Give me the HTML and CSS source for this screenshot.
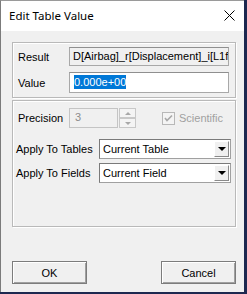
FILE: index.html
```html
<html lang="en">

<head>
    <meta charset="UTF-8">
    <meta name="viewport" content="width=device-width, initial-scale=1.0">
    <title>Edit Table Value</title>
    <link rel="stylesheet" href="styles.css">
</head>

<body>
    <main class="window">
        <header class="titlebar">
            <span class="title">Edit Table Value</span>
            <svg class="close" width="11" height="11" viewBox="0 0 11 11">
                <path d="M0.5 0.5 L10.5 10.5 M10.5 0.5 L0.5 10.5" stroke="#000" stroke-width="1" fill="none" />
            </svg>
        </header>

        <section class="content">
            <div class="group group-top">
                <div class="row">
                    <label class="lbl lbl-short">Result</label>
                    <div class="field field-readonly">D[Airbag]_r[Displacement]_i[L1f]</div>
                </div>
                <div class="row">
                    <label class="lbl lbl-short">Value</label>
                    <div class="field field-value"><span class="selected">0.000e+00</span></div>
                </div>
            </div>

            <div class="group group-bottom">
                <div class="row row-precision">
                    <label class="lbl lbl-short">Precision</label>
                    <div class="field field-disabled">3</div>
                    <div class="spinner">
                        <div class="spin-half"><span class="arrow-up"></span></div>
                        <div class="spin-half"><span class="arrow-down"></span></div>
                    </div>
                    <div class="check">
                        <svg width="13" height="13" viewBox="0 0 13 13">
                            <rect x="0.5" y="0.5" width="12" height="12" fill="#f4f4f4" stroke="#b8b8b8" />
                            <path d="M3 6 L5 8.5 L10 3.5" stroke="#a8a8a8" stroke-width="1.6" fill="none" />
                        </svg>
                        <span>Scientific</span>
                    </div>
                </div>
                <div class="row row-combo">
                    <label class="lbl lbl-long">Apply To Tables</label>
                    <div class="combo">
                        <span class="combo-text">Current Table</span>
                        <span class="combo-btn"><span class="arrow-down dark"></span></span>
                    </div>
                </div>
                <div class="row row-combo">
                    <label class="lbl lbl-long">Apply To Fields</label>
                    <div class="combo">
                        <span class="combo-text">Current Field</span>
                        <span class="combo-btn"><span class="arrow-down dark"></span></span>
                    </div>
                </div>
            </div>

            <div class="buttons">
                <button>OK</button>
                <button>Cancel</button>
            </div>
        </section>
    </main>
</body>

</html>
```

FILE: styles.css
```css
* {
    box-sizing: border-box;
}

body {
    margin: 0;
    background-color: #1d2850;
    font-family: 'Liberation Sans', Arial, sans-serif;
    font-size: 11px;
    color: #000;
}

.window {
    width: 244px;
    height: 292px;
    background-color: #f0f0f0;
    border-left: 1px solid #7b7b7b;
    border-top: 1px solid #9a9a9a;
    display: flex;
    flex-direction: column;
}

.titlebar {
    height: 30px;
    background-color: #fff;
    display: flex;
    align-items: center;
    justify-content: space-between;
    padding: 0 9px 0 8px;
}

.title {
    font-family: 'Noto Sans', sans-serif;
    font-size: 11.5px;
    margin-top: -1px;
}

.close {
    display: block;
    margin-top: -1px;
}

.content {
    padding: 11px 8px 0 11px;
}

.group {
    border: 1px solid #b9b9b9;
    box-shadow: inset 1px 1px 0 #fff, 1px 1px 0 #fff;
    width: 224px;
}

.group-top {
    height: 56px;
    padding: 4px 5px 0 5px;
    display: flex;
    flex-direction: column;
    gap: 6px;
}

.group-bottom {
    margin-top: 2px;
    height: 127px;
    padding: 7px 3px 0 3px;
    display: flex;
    flex-direction: column;
}

.row {
    display: flex;
    align-items: center;
}

.lbl {
    display: block;
}

.lbl-short {
    width: 51px;
}

.row-precision .lbl-short {
    margin-left: 2px;
}

.lbl-long {
    width: 83px;
}

.field {
    height: 19px;
    width: 160px;
    border: 1px solid #a8a8a8;
    border-top-color: #8f8f8f;
    padding: 0 0 0 3px;
    line-height: 17px;
    white-space: nowrap;
    overflow: hidden;
}

.field-readonly {
    background-color: #f0f0f0;
}

.field-value {
    height: 21px;
    background-color: #fff;
    line-height: 19px;
    padding-left: 4px;
}

.selected {
    background-color: #0078d7;
    color: #fff;
    padding: 1px 0;
}

.field-disabled {
    width: 49px;
    height: 20px;
    background-color: #f0f0f0;
    border-color: #c4c4c4;
    color: #8c8c8c;
    padding-left: 5px;
    line-height: 16px;
}

.spinner {
    width: 17px;
    height: 20px;
    margin-left: 1px;
    display: flex;
    flex-direction: column;
}

.spin-half {
    flex: 1;
    border: 1px solid #c8c8c8;
    background-color: #f4f4f4;
    display: flex;
    align-items: center;
    justify-content: center;
}

.arrow-up,
.arrow-down {
    width: 0;
    height: 0;
    border-left: 3px solid transparent;
    border-right: 3px solid transparent;
}

.arrow-up {
    border-bottom: 3px solid #a8a8a8;
}

.arrow-down {
    border-top: 3px solid #a8a8a8;
}

.arrow-down.dark {
    border-left-width: 4px;
    border-right-width: 4px;
    border-top: 4px solid #000;
}

.check {
    margin-left: 26px;
    display: flex;
    align-items: center;
    gap: 4px;
    color: #a0a0a0;
}

.check svg {
    display: block;
}

.row-combo {
    margin-top: 11px;
}

.row-combo + .row-combo {
    margin-top: 4px;
}

.combo {
    width: 132px;
    height: 20px;
    background-color: #fff;
    border: 1px solid #a0a0a0;
    border-top-color: #7a7a7a;
    border-left-color: #7a7a7a;
    display: flex;
    align-items: center;
    justify-content: space-between;
    padding: 1px 1px 1px 3px;
}

.combo-btn {
    width: 15px;
    height: 16px;
    background-color: #f0f0f0;
    border: 1px solid;
    border-color: #fff #8a8a8a #8a8a8a #fff;
    display: flex;
    align-items: center;
    justify-content: center;
}

.buttons {
    margin-top: 34px;
    width: 224px;
    display: flex;
    justify-content: space-between;
}

button {
    width: 75px;
    height: 23px;
    font-family: 'Liberation Sans', Arial, sans-serif;
    font-size: 11px;
    background-color: #f0f0f0;
    border: 1px solid #7c7c7c;
    box-shadow: inset 1px 1px 0 #fff, inset -1px -1px 0 #a0a0a0;
    padding: 0;
    color: #000;
}
```
